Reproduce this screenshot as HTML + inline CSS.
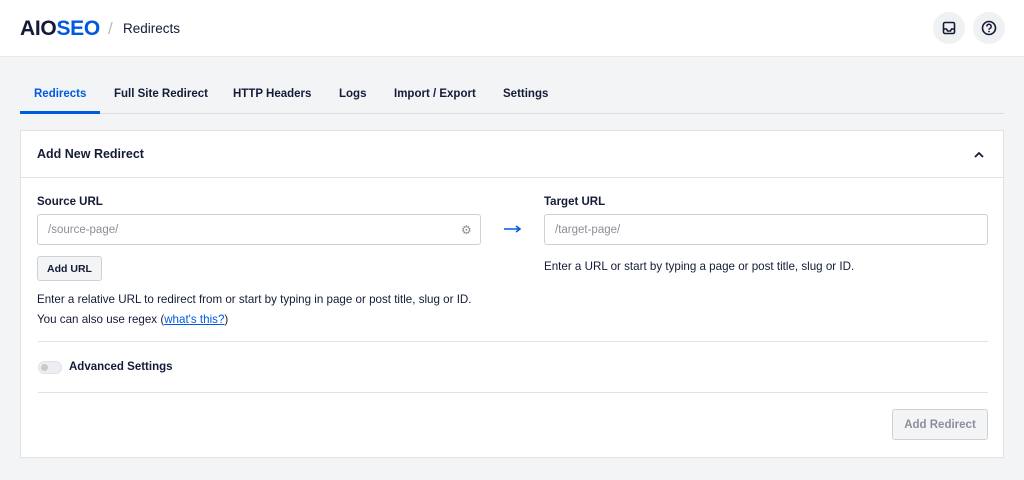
<!DOCTYPE html>
<html><head><style>
*{box-sizing:border-box;margin:0;padding:0}
body{width:1024px;height:480px;background:#f3f4f5;font-family:"Liberation Sans",sans-serif;color:#141b38;position:relative;overflow:hidden}
.hdr{position:absolute;left:0;top:0;width:1024px;height:57px;background:#fff;border-bottom:1px solid #e8e8eb}
.logo{position:absolute;left:20px;top:17px;font-size:21px;font-weight:900;letter-spacing:-0.3px}
.logo span{color:#005ae0}
.sep{position:absolute;left:108px;top:19px;color:#bbb;font-size:17px}
.ttl{position:absolute;left:123px;top:21px;font-size:13.5px;color:#141b38}
.ic{position:absolute;top:12px;width:32px;height:32px;border-radius:50%;background:#f0f1f3}
.tabs{position:absolute;left:20px;top:88px;font-size:11.5px;font-weight:bold}
.tabs span{position:absolute;white-space:nowrap}
.tline{position:absolute;left:20px;top:113px;width:984px;height:1px;background:#dcdde1}
.act{position:absolute;left:20px;top:111px;width:80px;height:3px;background:#005ae0}
.card{position:absolute;left:20px;top:130px;width:984px;height:328px;background:#fff;border:1px solid #e1e2e5}
.t{position:absolute;white-space:nowrap}
.inp{position:absolute;height:31px;border:1px solid #d0d1d7;border-radius:3px;font-size:11.5px;color:#8c8f9a;padding:9px 10px}
.btn{position:absolute;background:#f3f4f5;border:1px solid #d0d1d7;border-radius:3px;font-weight:bold;font-size:10.5px;text-align:center}
.sm{font-size:11.6px;color:#141b38;line-height:20px}
.hr{position:absolute;left:17px;width:950px;height:1px;background:#e1e2e5}
</style></head><body>
<div class="hdr">
<div class="logo">AIO<span>SEO</span></div>
<div class="sep">/</div>
<div class="ttl">Redirects</div>
<div class="ic" style="left:933px"><svg width="32" height="32" viewBox="0 0 32 32"><rect x="10.5" y="10.5" width="11" height="11" rx="1.5" fill="none" stroke="#141b38" stroke-width="1.6"/><path d="M10.5 17h3l1 2h3l1-2h3" fill="none" stroke="#141b38" stroke-width="1.6"/></svg></div>
<div class="ic" style="left:973px"><svg width="32" height="32" viewBox="0 0 32 32"><circle cx="16" cy="16" r="6.5" fill="none" stroke="#141b38" stroke-width="1.6"/><path d="M13.8 14.5a2.2 2.2 0 1 1 3 2c-.6.3-.8.6-.8 1.2" fill="none" stroke="#141b38" stroke-width="1.5"/><circle cx="16" cy="19.5" r=".9" fill="#141b38"/></svg></div>
</div>
<div class="tabs">
<span style="left:14px;color:#005ae0">Redirects</span>
<span style="left:94px">Full Site Redirect</span>
<span style="left:213px">HTTP Headers</span>
<span style="left:319px">Logs</span>
<span style="left:374px">Import / Export</span>
<span style="left:483px">Settings</span>
</div>
<div class="tline"></div><div class="act"></div>
<div class="card">
<div class="t" style="left:16px;top:16px;font-size:12.5px;font-weight:bold">Add New Redirect</div>
<svg class="t" style="left:951px;top:18px" width="14" height="12" viewBox="0 0 14 12"><path d="M3 8l4-4 4 4" fill="none" stroke="#141b38" stroke-width="1.8"/></svg>
<div style="position:absolute;left:0;top:46px;width:982px;height:1px;background:#e1e2e5"></div>
<div class="t" style="left:16px;top:65px;font-size:11.5px;font-weight:bold">Source URL</div>
<div class="inp" style="left:16px;top:83px;width:444px">/source-page/</div>
<div class="t" style="left:440px;top:92px;color:#8c8f9a;font-size:12px">⚙</div>
<div class="btn" style="left:16px;top:125px;width:65px;height:25px;line-height:24px">Add URL</div>
<div class="t sm" style="left:16px;top:159px">Enter a relative URL to redirect from or start by typing in page or post title, slug or ID.<br>You can also use regex (<span style="color:#005ae0;text-decoration:underline">what's this?</span>)</div>
<svg class="t" style="left:483px;top:94px" width="18" height="8" viewBox="0 0 18 8"><path d="M0 4h15M12 1l4 3-4 3" fill="none" stroke="#005ae0" stroke-width="1.6"/></svg>
<div class="t" style="left:523px;top:65px;font-size:11.5px;font-weight:bold">Target URL</div>
<div class="inp" style="left:523px;top:83px;width:444px">/target-page/</div>
<div class="t sm" style="left:523px;top:126px">Enter a URL or start by typing a page or post title, slug or ID.</div>
<div class="hr" style="top:210px"></div>
<div style="position:absolute;left:17px;top:230px;width:24px;height:13px;border-radius:7px;background:#eceef1;border:1px solid #e0e1e4"><div style="position:absolute;left:2px;top:2px;width:7px;height:7px;border-radius:50%;background:#c8cace"></div></div>
<div class="t" style="left:48px;top:230px;font-size:11.5px;font-weight:bold">Advanced Settings</div>
<div class="hr" style="top:261px"></div>
<div class="btn" style="left:871px;top:278px;width:96px;height:31px;line-height:30px;color:#8c8f9a;font-size:11.5px">Add Redirect</div>
</div>
</body></html>
